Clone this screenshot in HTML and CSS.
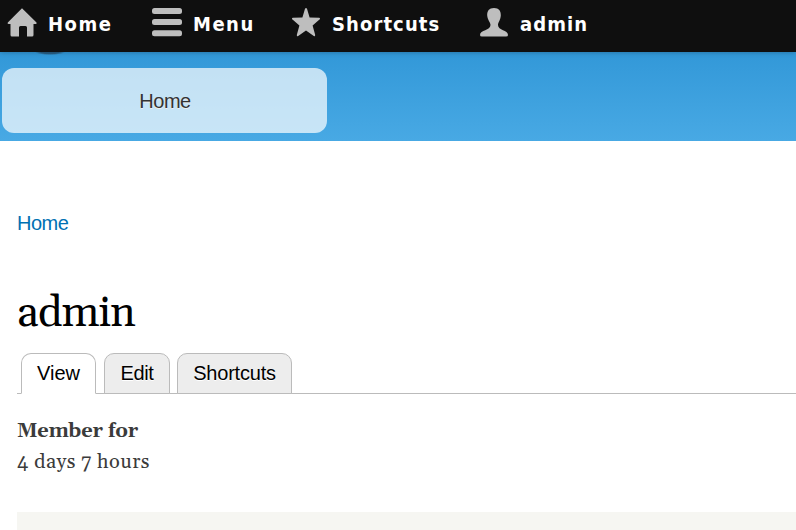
FILE: index.html
```html
<!DOCTYPE html>
<html lang="en">
<head>
<meta charset="utf-8">
<title>admin</title>
<link rel="stylesheet" href="styles.css">
</head>
<body>
<nav class="toolbar">
  <a class="item home"><svg width="30" height="30" viewBox="0 0 30 30"><path d="M15 .3 29.500 14.500Q30 15.500 29 16H26.500V27Q26.500 28.500 25 28.500H20V19.500Q20 18 18.500 18H13.500Q12 18 12 19.500V28.500H5Q3.500 28.500 3.500 27V16H1.500Q0 15.500 .8 14.500Z"/></svg><span>Home</span></a>
  <a class="item menu"><svg width="30" height="30" viewBox="0 0 30 30"><rect y="0" width="30" height="6" rx="2.500"/><rect y="11" width="30" height="6" rx="2.500"/><rect y="22.300" width="30" height="6" rx="2.500"/></svg><span>Menu</span></a>
  <a class="item star"><svg width="30" height="30" viewBox="0 0 30 30"><path d="M14 .8Q15 -.8 16 .8L18.600 9.600 28.300 9.800Q29.700 10.700 28.500 11.500L21.600 17.500 24.200 27Q24 28.700 22.800 28L15 22.600 7.200 28Q5.800 28.700 5.800 27L8.400 17.500 1.500 11.500Q.3 10.700 1.700 9.800L11.400 9.600Z"/></svg><span>Shortcuts</span></a>
  <a class="item user"><svg width="30" height="30" viewBox="0 0 30 30"><path d="M14 0C19 0 21 3 20.800 7.500 20.600 12 18 14.500 18 17 18 22.500 28 22 28 27Q28 28.500 26 28.500H2Q0 28.500 0 27C0 22 10.500 22.500 10.500 17 10.500 14.500 7.500 12 7.200 7.500 7 3 9 0 14 0Z"/></svg><span>admin</span></a>
</nav>
<header class="header"><a class="main-tab">Home</a></header>
<main class="content">
  <a class="breadcrumb"><span>Home</span></a>
  <h1>admin</h1>
  <div class="tabs"><a class="tab active">View</a><a class="tab edit">Edit</a><a class="tab last">Shortcuts</a></div>
  <h4>Member for</h4>
  <p>4 days 7 hours</p>
  <div class="footer-block"></div>
</main>
</body>
</html>
```
FILE: styles.css
```css
* { box-sizing: border-box; }
body { margin: 0; height: 530px; overflow: hidden; background: #fff; }
.toolbar { position: relative; height: 52px; background: #0f0f0f; display: flex; color: #fff; font: bold 20px/24px "DejaVu Sans Condensed", "DejaVu Sans", sans-serif; font-stretch: 90%; letter-spacing: 1.5px; padding: 8px 0 0 7px; box-shadow: 0 0 5px rgba(0, 0, 0, .3); }
.item { display: flex; height: 30px; }
.item svg { fill: #bebebe; margin-right: 11px; flex: none; }
.item span { margin-top: 4px; }
.home { width: 145px; } .menu { width: 139px; } .star { width: 189px; letter-spacing: 1.1px; }
.user { letter-spacing: 1.1px; }
.user svg { margin-right: 10px; }
.header { height: 89px; background: radial-gradient(ellipse 15px 3px at 50px 0, #285f85 60%, transparent), linear-gradient(#3298d8, #48a9e4); padding: 16px 2px; }
.main-tab { display: block; width: 325px; height: 65px; border-radius: 12px; background: rgba(255, 255, 255, .7); text-align: center; font: 20px/66px "Liberation Sans", sans-serif; letter-spacing: -.5px; color: #333; text-shadow: 0 1px #eee; padding-left: 1px; }
.content { padding: 70px 0 0 17px; font-family: Gelasio, "Liberation Serif", serif; color: #3b3b3b; }
.breadcrumb { display: block; color: #0071b3; font: 20px/24px "Liberation Sans", sans-serif; letter-spacing: -.5px; }
h1 { margin: 51px 0 0; font-size: 43px; line-height: 56px; font-weight: normal; letter-spacing: -.9px; color: #000; }
.tabs { display: flex; height: 52px; padding: 11px 0 0 4px; border-bottom: 1px solid #bbb; }
.tab { width: 75px; height: 41px; margin-right: 8px; text-align: center; border: 1px solid #bbb; border-radius: 10px 10px 0 0; background: #ededed; font: 20px/38px "Liberation Sans", sans-serif; color: #000; text-shadow: 0 1px #fff; }
.active { background: #fff; border-bottom-color: #fff; }
.edit { width: 66px; margin-right: 7px; letter-spacing: -.4px; }
.last { width: 115px; letter-spacing: -.2px; }
h4 { margin: 22px 0 0; font-size: 20px; line-height: 31px; letter-spacing: -.2px; }
p { margin: 0; font-size: 20px; line-height: 31px; letter-spacing: .45px; }
.footer-block { height: 18px; margin-top: 34px; background: #f6f6f2; }
```
